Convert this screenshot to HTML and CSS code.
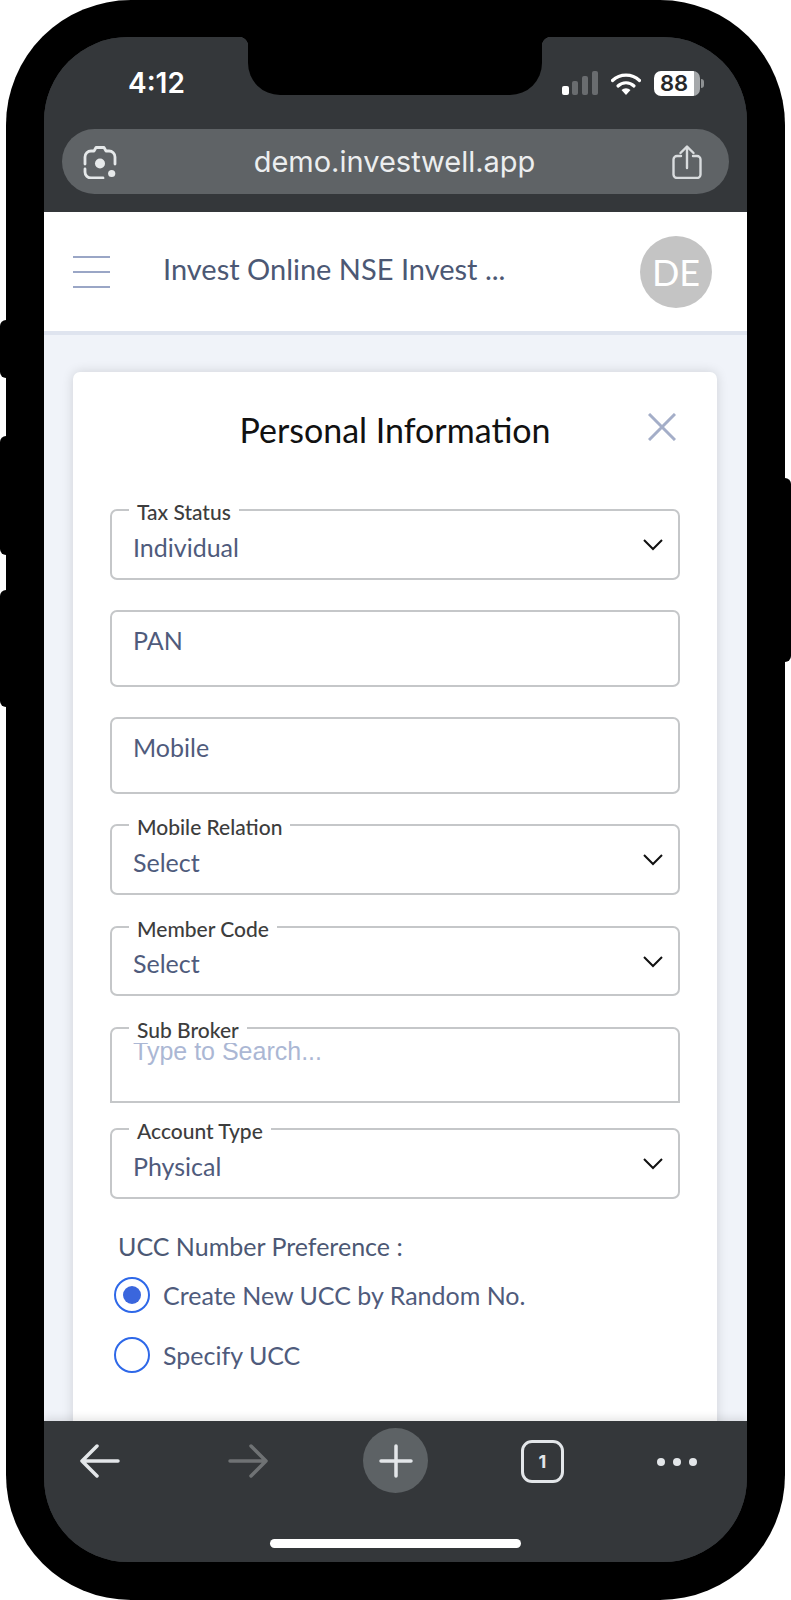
FILE: index.html
```html
<!DOCTYPE html>
<html lang="en">
<head>
    <meta charset="UTF-8">
    <meta name="viewport" content="width=device-width, initial-scale=1.0">
    <title>Personal Information</title>
    <link rel="stylesheet" href="styles.css">
</head>
<body>
<div class="phone">
    <span class="side-btn side-mute"></span>
    <span class="side-btn side-up"></span>
    <span class="side-btn side-down"></span>
    <span class="side-btn side-power"></span>

    <div class="screen">
        <div class="browser-top">
            <div class="notch"></div>
            <div class="status-row">
                <span class="clock">4:12</span>
                <div class="status-icons">
                    <svg class="signal" width="36" height="24" viewBox="0 0 36 24">
                        <rect x="0" y="15" width="7" height="9" rx="2" fill="#fff"/>
                        <rect x="10" y="10" width="6" height="14" rx="2" fill="#696c6f"/>
                        <rect x="20" y="5" width="6" height="19" rx="2" fill="#696c6f"/>
                        <rect x="30" y="0" width="6" height="24" rx="2" fill="#696c6f"/>
                    </svg>
                    <svg class="wifi" width="30" height="24" viewBox="0 0 30 24">
                        <path d="M1.5 9.5A19.5 19.5 0 0 1 28.500 9.500" fill="none" stroke="#fff" stroke-width="3.200" stroke-linecap="round"/>
                        <path d="M7 15A11.500 11.500 0 0 1 23 15" fill="none" stroke="#fff" stroke-width="3.200" stroke-linecap="round"/>
                        <path d="M10.500 19a6.500 6.500 0 0 1 9 0L15 24z" fill="#fff"/>
                    </svg>
                    <div class="battery"><span class="battery-level">88</span><span class="battery-nub"></span></div>
                </div>
            </div>
            <div class="url-bar">
                <svg width="34" height="34" viewBox="0 0 34 34" fill="none" stroke="#e6e9ea" stroke-width="2.800" stroke-linecap="round" stroke-linejoin="round">
                    <path d="M2 19v-7a6 6 0 0 1 6-6h3l2-3.500h8l2 3.500h3a6 6 0 0 1 6 6v7"/>
                    <path d="M2 24v3a6 6 0 0 0 6 6h12"/>
                    <circle cx="17" cy="18.500" r="5" fill="#e6e9ea" stroke="none"/>
                    <circle cx="28.700" cy="28.500" r="3.600" fill="#e6e9ea" stroke="none"/>
                </svg>
                <span class="url-text">demo.investwell.app</span>
                <svg width="30" height="34" viewBox="0 0 30 34" fill="none" stroke="#d9dcde" stroke-width="2.400" stroke-linecap="round" stroke-linejoin="round">
                    <path d="M9 11H5a3.500 3.500 0 0 0-3.500 3.500v15A3.500 3.500 0 0 0 5 33h20a3.500 3.500 0 0 0 3.500-3.500v-15A3.500 3.500 0 0 0 25 11h-4"/>
                    <path d="M15 23V2M8.500 8 15 1.500 21.500 8"/>
                </svg>
            </div>
        </div>

        <div class="page">
            <header class="app-header">
                <div class="hamburger"><span></span><span></span><span></span></div>
                <div class="app-title">Invest Online NSE Invest ...</div>
                <div class="avatar">DE</div>
            </header>

            <main class="page-body">
                <section class="card">
                    <h1 class="card-title">Personal Information</h1>
                    <svg class="close-icon" width="28" height="28" viewBox="0 0 28 28" stroke="#a4aec8" stroke-width="3">
                        <path d="M1 1l26 26M27 1 1 27"/>
                    </svg>

                    <div class="field field-select">
                        <label class="field-label">Tax Status</label>
                        <span class="field-value">Individual</span>
                        <svg class="chevron" width="20" height="12" viewBox="0 0 20 12"><path d="M1 1l9 9 9-9"/></svg>
                    </div>
                    <div class="field field-input">
                        <span class="field-value">PAN</span>
                    </div>
                    <div class="field field-input">
                        <span class="field-value">Mobile</span>
                    </div>
                    <div class="field field-select gap-wide">
                        <label class="field-label">Mobile Relation</label>
                        <span class="field-value">Select</span>
                        <svg class="chevron" width="20" height="12" viewBox="0 0 20 12"><path d="M1 1l9 9 9-9"/></svg>
                    </div>
                    <div class="field field-select field-short gap-wide">
                        <label class="field-label">Member Code</label>
                        <span class="field-value">Select</span>
                        <svg class="chevron" width="20" height="12" viewBox="0 0 20 12"><path d="M1 1l9 9 9-9"/></svg>
                    </div>
                    <div class="field field-search">
                        <label class="field-label">Sub Broker</label>
                        <span class="field-value placeholder">Type to Search...</span>
                    </div>
                    <div class="field field-select">
                        <label class="field-label">Account Type</label>
                        <span class="field-value">Physical</span>
                        <svg class="chevron" width="20" height="12" viewBox="0 0 20 12"><path d="M1 1l9 9 9-9"/></svg>
                    </div>

                    <div class="ucc-title">UCC Number Preference :</div>
                    <div class="radio-row">
                        <span class="radio radio-on"></span>
                        <span>Create New UCC by Random No.</span>
                    </div>
                    <div class="radio-row">
                        <span class="radio"></span>
                        <span>Specify UCC</span>
                    </div>
                </section>
            </main>
        </div>

        <div class="browser-bottom">
            <div class="tool-row">
                <svg class="tool-back" width="40" height="34" viewBox="0 0 40 34" fill="none" stroke="#e3e6e9" stroke-width="3.500" stroke-linecap="round" stroke-linejoin="round">
                    <path d="M38 17H2M17 2 2 17l15 15"/>
                </svg>
                <svg class="tool-forward" width="40" height="34" viewBox="0 0 40 34" fill="none" stroke="#6f7274" stroke-width="3.500" stroke-linecap="round" stroke-linejoin="round">
                    <path d="M2 17h36M23 2l15 15-15 15"/>
                </svg>
                <div class="tool-new">
                    <svg width="34" height="34" viewBox="0 0 34 34" stroke="#e3e6e9" stroke-width="3.500" stroke-linecap="round">
                        <path d="M17 2v30M2 17h30"/>
                    </svg>
                </div>
                <div class="tool-tabs">1</div>
                <div class="tool-more"><span></span><span></span><span></span></div>
            </div>
            <div class="home-bar"></div>
        </div>
    </div>
</div>
</body>
</html>
```

FILE: styles.css
```css
* {
    box-sizing: border-box;
}

body {
    margin: 0;
    background-color: #fff;
    font-family: 'Lato', sans-serif;
}

/* phone frame */
.phone {
    position: relative;
    width: 779px;
    height: 1600px;
    margin: 0 6px;
    padding: 37px 38px 38px;
    background-color: #000;
    border-radius: 125px;
}

.side-btn {
    position: absolute;
    width: 12px;
    background-color: #000;
    border-radius: 6px;
}

.side-mute { left: -6px; top: 320px; height: 58px; }
.side-up { left: -6px; top: 436px; height: 119px; }
.side-down { left: -6px; top: 590px; height: 117px; }
.side-power { right: -6px; top: 478px; height: 184px; }

.screen {
    position: relative;
    display: flex;
    flex-direction: column;
    height: 1525px;
    overflow: hidden;
    border-radius: 84px;
    background-color: #34373a;
}

/* browser chrome, top */
.browser-top {
    flex: none;
    height: 175px;
    background-color: #34373a;
}

.notch {
    position: absolute;
    top: 0;
    left: 204px;
    width: 294px;
    height: 58px;
    background-color: #000;
    border-radius: 0 0 32px 32px;
}

.notch::before,
.notch::after {
    content: '';
    position: absolute;
    top: 0;
    width: 9px;
    height: 9px;
}

.notch::before {
    left: -9px;
    background: radial-gradient(circle at 0 100%, transparent 9px, #000 9.500px);
}

.notch::after {
    right: -9px;
    background: radial-gradient(circle at 100% 100%, transparent 9px, #000 9.500px);
}

.status-row {
    display: flex;
    align-items: center;
    justify-content: space-between;
    height: 92px;
    padding: 0 47px 0 84px;
    color: #fff;
}

.clock {
    font-family: 'Inter', sans-serif;
    font-size: 28px;
    font-weight: 600;
}

.status-icons {
    display: flex;
    align-items: center;
}

.wifi {
    margin-left: 13px;
}

.battery {
    position: relative;
    width: 46px;
    height: 25px;
    margin-left: 13px;
    border-radius: 7px;
    background: linear-gradient(to right, #fff 87%, #a5a8aa 87%);
    color: #26282a;
    font-family: 'Inter', sans-serif;
    font-size: 22px;
    font-weight: 600;
    line-height: 25px;
    text-align: center;
}

.battery-level {
    display: block;
    width: 40px;
}

.battery-nub {
    position: absolute;
    top: 8px;
    right: -4px;
    width: 3px;
    height: 9px;
    border-radius: 0 3px 3px 0;
    background-color: #8e9193;
}

.url-bar {
    display: flex;
    align-items: center;
    justify-content: space-between;
    height: 65px;
    margin: 0 18px;
    padding: 0 27px 0 21px;
    border-radius: 33px;
    background-color: #5f6366;
}

.url-text {
    color: #eceeef;
    font-family: 'Inter', sans-serif;
    font-size: 29px;
}

/* web page */
.page {
    flex: 1;
    min-height: 0;
    overflow: hidden;
    display: flex;
    flex-direction: column;
    background-color: #f0f3f9;
}

.app-header {
    flex: none;
    display: flex;
    align-items: center;
    height: 123px;
    padding: 0 35px 0 29px;
    background-color: #fff;
    border-bottom: 4px solid #dfe4ef;
}

.hamburger {
    display: flex;
    flex-direction: column;
    gap: 13px;
    width: 37px;
}

.hamburger span {
    height: 2px;
    background-color: #9aa6c6;
}

.app-title {
    flex: 1;
    margin-left: 53px;
    margin-top: -6px;
    color: #4c5874;
    font-size: 29px;
}

.avatar {
    width: 72px;
    height: 72px;
    border-radius: 50%;
    background-color: #c4c4c4;
    color: #fff;
    font-size: 36px;
    line-height: 72px;
    text-align: center;
}

.page-body {
    padding: 37px 30px 0 29px;
}

.card {
    position: relative;
    height: 1100px;
    padding: 0 37px;
    background-color: #fff;
    border-radius: 7px;
    box-shadow: 0 0 12px rgba(0, 0, 0, 0.14);
}

.card-title {
    height: 137px;
    margin: 0;
    padding-top: 31px;
    color: #111;
    font-size: 34px;
    font-weight: 400;
    line-height: 54px;
    text-align: center;
}

.close-icon {
    position: absolute;
    top: 41px;
    right: 41px;
}

/* form fields */
.field {
    position: relative;
    display: flex;
    margin-bottom: 30px;
    padding: 0 21px;
    border: 2px solid #c5c7c9;
    border-radius: 7px;
}

.field-select {
    height: 71px;
    align-items: center;
    padding-top: 4px;
}

.field-short {
    height: 70px;
}

.field-input {
    height: 77px;
    padding-top: 11px;
}

.field-search {
    height: 76px;
    margin-bottom: 25px;
    padding-top: 5px;
    border-radius: 7px 7px 0 0;
}

.gap-wide {
    margin-bottom: 31px;
}

.field-label {
    position: absolute;
    top: -12px;
    left: 17px;
    padding: 0 8px;
    background-color: #fff;
    color: #3d3d3d;
    font-size: 21px;
    font-weight: 500;
    line-height: 26px;
}

.field-value {
    color: #4f5b7c;
    font-size: 25px;
    line-height: 34px;
}

.placeholder {
    color: #abb7d4;
    font-family: 'Liberation Sans', sans-serif;
}

.chevron {
    position: absolute;
    top: 28px;
    right: 15px;
    fill: none;
    stroke: #111;
    stroke-width: 2;
}

.ucc-title {
    margin: 26px 0 14px 8px;
    color: #4c5874;
    font-size: 25px;
    line-height: 34px;
}

.radio-row {
    display: flex;
    align-items: center;
    gap: 13px;
    height: 36px;
    margin: 0 0 24px 4px;
    color: #4f5b7c;
    font-size: 25px;
}

.radio {
    display: flex;
    align-items: center;
    justify-content: center;
    width: 36px;
    height: 36px;
    border: 2px solid #2e68e8;
    border-radius: 50%;
    background-color: #fff;
}

.radio-on::after {
    content: '';
    width: 18px;
    height: 18px;
    border-radius: 50%;
    background-color: #3a66dd;
}

/* browser chrome, bottom */
.browser-bottom {
    flex: none;
    position: relative;
    height: 141px;
    padding-top: 7px;
    background-color: #34373a;
    box-shadow: 0 -3px 8px rgba(0, 0, 0, 0.1);
}

.tool-row {
    display: flex;
    align-items: center;
    gap: 93px;
    height: 65px;
    padding-left: 36px;
}

.tool-forward {
    margin-left: 15px;
}

.tool-new {
    display: flex;
    align-items: center;
    justify-content: center;
    flex: none;
    width: 65px;
    height: 65px;
    margin-left: 2px;
    border-radius: 50%;
    background-color: #5d6265;
}

.tool-tabs {
    flex: none;
    width: 43px;
    height: 43px;
    margin-top: 2px;
    border: 3px solid #e3e6e9;
    border-radius: 11px;
    color: #e3e6e9;
    font-family: 'Inter', sans-serif;
    font-size: 18px;
    font-weight: 700;
    line-height: 37px;
    text-align: center;
}

.tool-more {
    display: flex;
    gap: 8px;
    margin-top: 3px;
}

.tool-more span {
    width: 8px;
    height: 8px;
    border-radius: 50%;
    background-color: #e3e6e9;
}

.home-bar {
    width: 251px;
    height: 9px;
    margin: 46px auto 0;
    border-radius: 5px;
    background-color: #fff;
}
```
